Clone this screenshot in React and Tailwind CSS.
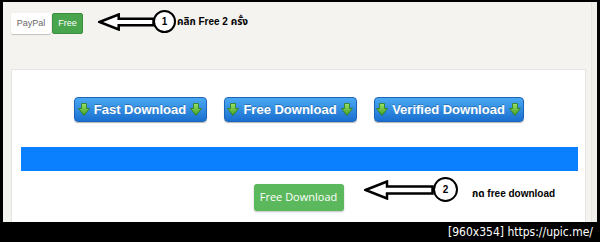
import React from "react";

const font = { fontFamily: '"Liberation Sans", "Noto Sans Thai", "Noto Sans", sans-serif' };

function GreenArrow() {
  return (
    <svg width="12" height="13" viewBox="0 0 12 13" className="shrink-0">
      <defs>
        <linearGradient id="ga" x1="0" y1="0" x2="0" y2="1">
          <stop offset="0" stopColor="#9be36a" />
          <stop offset="1" stopColor="#3f9e1e" />
        </linearGradient>
      </defs>
      <path
        d="M3.5 0.5 H8.5 V5.5 H11.5 L6 12.5 L0.5 5.5 H3.5 Z"
        fill="url(#ga)"
        stroke="#2f7a18"
        strokeWidth="0.8"
        strokeLinejoin="round"
      />
    </svg>
  );
}

function BlueButton({ label, width }) {
  return (
    <div
      className={`flex h-[25px] items-center justify-center gap-[4px] rounded-[4px] border border-[#1b64b8] bg-gradient-to-b from-[#4aa9f2] to-[#1a6fd0] text-[13px] font-bold text-white shadow-[0_1px_1px_rgba(0,0,0,0.3)] ${width}`}
      style={{ ...font, textShadow: "0 -1px 0 rgba(0,0,0,0.25)" }}
    >
      <GreenArrow />
      <span>{label}</span>
      <GreenArrow />
    </div>
  );
}

function HollowArrow({ width, height }) {
  const head = height * 1.15;
  const shaftTop = height * 0.32;
  const shaftBot = height * 0.68;
  return (
    <svg width={width} height={height} viewBox={`0 0 ${width} ${height}`}>
      <path
        d={`M1.5 ${height / 2} L${head} 1.5 L${head} ${shaftTop} L${width - 1.5} ${shaftTop} L${width - 1.5} ${shaftBot} L${head} ${shaftBot} L${head} ${height - 1.5} Z`}
        fill="white"
        stroke="black"
        strokeWidth="2.5"
        strokeLinejoin="miter"
      />
    </svg>
  );
}

function Circled({ n, size }) {
  return (
    <div
      className="flex items-center justify-center rounded-full border-[2.5px] border-black bg-white text-[10px] font-bold text-black"
      style={{ width: size, height: size, ...font }}
    >
      {n}
    </div>
  );
}

export default function App() {
  return (
    <div className="flex h-[242px] w-[600px] flex-col overflow-hidden bg-black" style={font}>
      <div className="relative ml-[3px] mr-[3px] mt-[2px] h-[220px] overflow-hidden bg-[#f4f3ef]">
        <div className="absolute right-0 top-0 h-full w-[6px] bg-[#efeee9] border-l border-[#e6e5e0]" />

        <div className="flex pl-[8px] pt-[11px]">
          <div className="flex h-[21px] w-[40px] items-center justify-center rounded-[2px] bg-white text-[9px] text-[#666] shadow-[0_1px_1px_rgba(0,0,0,0.2)]">
            PayPal
          </div>
          <div className="ml-[1px] flex h-[21px] w-[31px] items-center justify-center rounded-[2px] border border-[#3c8f3f] bg-[#49a54d] text-[9px] text-white">
            Free
          </div>
        </div>

        <div className="absolute left-[95px] top-[8px] flex items-center">
          <HollowArrow width={57} height={18} />
          <div className="-ml-[2px]">
            <Circled n="1" size={23} />
          </div>
          <span className="ml-[1px] text-[10px] font-bold text-black">คลิก Free 2 ครั้ง</span>
        </div>

        <div className="ml-[8px] mr-[11px] mt-[35px] h-[160px] border border-[#e4e4e4] bg-white pt-[27px]">
          <div className="flex justify-center gap-[17px]">
            <BlueButton label="Fast Download" width="w-[133px]" />
            <BlueButton label="Free Download" width="w-[133px]" />
            <BlueButton label="Verified Download" width="w-[150px]" />
          </div>

          <div className="ml-[9px] mr-[7px] mt-[25px] h-[24px] bg-[#0a80ff]" />

          <div className="relative mt-[13px] flex justify-center">
            <div className="flex h-[27px] w-[90px] items-center justify-center rounded-[3px] bg-[#5cb85c] text-[11px] text-white shadow-[0_1px_2px_rgba(0,0,0,0.25)]" style={{ fontFamily: '"Open Sans", "Liberation Sans", sans-serif' }}>
              Free Download
            </div>
            <div className="absolute left-[352px] top-[-7px] flex items-center">
              <HollowArrow width={70} height={20} />
              <div className="-ml-[1px]">
                <Circled n="2" size={25} />
              </div>
              <span className="ml-[14px] mt-[8px] text-[10px] font-bold text-black">กด free download</span>
            </div>
          </div>
        </div>
      </div>
      <div className="flex flex-1 items-center justify-end pr-[7px] text-[12px] text-white" style={{ fontFamily: '"DejaVu Sans Condensed", "DejaVu Sans", sans-serif' }}>
        [960x354] https://upic.me/
      </div>
    </div>
  );
}
